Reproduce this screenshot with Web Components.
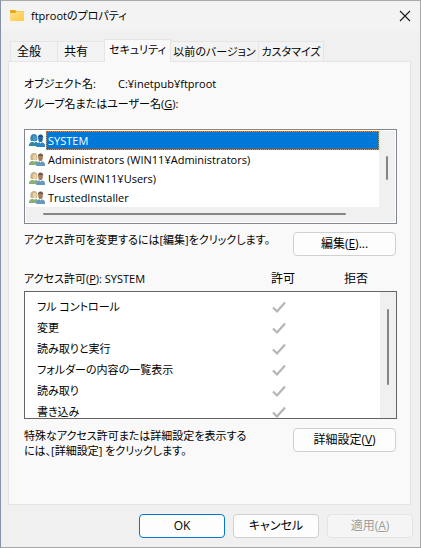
<!DOCTYPE html>
<html lang="ja">
<head>
<meta charset="utf-8">
<meta name="viewport" content="width=device-width, initial-scale=1">
<title>ftprootのプロパティ</title>
<style>
html,body{margin:0;height:100%}
body{display:flex;background:#f0f0f0;color:#000;font:11px/16px "Open Sans","Noto Sans CJK JP",sans-serif;font-feature-settings:"palt"}
</style>
</head>
<body>
<property-dialog>
  <title-bar slot="title">ftprootのプロパティ</title-bar>
  <tab-strip slot="tabs"></tab-strip>
  <security-panel slot="panel"></security-panel>
  <push-button slot="actions" kind="default">OK</push-button>
  <push-button slot="actions">キャンセル</push-button>
  <push-button slot="actions" kind="disabled">適用(<u>A</u>)</push-button>
</property-dialog>
<script>
const define = (name, html, setup) => customElements.define(name, class extends HTMLElement {
  connectedCallback() {
    if (this.shadowRoot) return;
    const root = this.attachShadow({mode: 'open'});
    root.innerHTML = '<style>*{box-sizing:border-box}</style>' + html;
    if (setup) setup(this, root);
  }
});

define('property-dialog', `
<style>
:host{display:flex;flex:1;min-width:0;min-height:100%;box-sizing:border-box;border:1px solid #a9a9a9;border-left-color:#8493a8;background:#f0f0f0}
.w{flex:1;min-width:0;display:flex;flex-direction:column}
main{flex:1;display:flex;flex-direction:column;padding:8px 9px 0 7px}
footer{display:flex;justify-content:flex-end;gap:8px;padding:9px 7px}
::slotted(security-panel){flex:1}
::slotted(push-button){width:86px}
</style>
<div class="w"><slot name="title"></slot>
<main><slot name="tabs"></slot><slot name="panel"></slot></main>
<footer><slot name="actions"></slot></footer></div>`);

define('title-bar', `
<style>
:host{display:flex;align-items:center;gap:7px;height:30px;padding:0 9px;background:#f3f3f3}
h1{flex:1;margin:0;font-size:11px;font-weight:400;line-height:16px}
svg{display:block}
button{border:0;background:none;padding:0;width:12px;height:12px}
</style>
<svg width="14" height="12" viewBox="0 0 14 12"><defs><linearGradient id="f" x2="1" y2="1"><stop stop-color="#ffe391"/><stop offset="1" stop-color="#fdc83f"/></linearGradient></defs><path d="M0 1Q0 0 1 0H5L6.500 1.200H13Q14 1.200 14 2.200V5H0Z" fill="#eda514"/><path d="M0 3H5.500L7 1.500H13Q14 1.500 14 2.500V10Q14 11 13 11H1Q0 11 0 10Z" fill="url(#f)"/></svg>
<h1><slot></slot></h1>
<button aria-label="閉じる"><svg width="12" height="12" viewBox="0 0 12 12"><path d="M1 1 11 11M11 1 1 11" stroke="#1a1a1a" stroke-width="1.1"/></svg></button>`);

define('tab-strip', `
<style>
:host{display:block}
div{display:flex;align-items:flex-end;padding-left:2px}
button{font:inherit;font-feature-settings:inherit;color:inherit;white-space:nowrap;height:20px;padding:1px 0 0;border:1px solid #e5e5e5;border-width:1px 1px 0 0;background:#f3f3f3}
button:first-child{border-left-width:1px}
button[aria-selected=true]{height:23px;margin:0 0 -1px -1px;padding:0 0 3px;border-left-width:1px;background:#f9f9f9;position:relative}
.a,.b{font-size:12px;text-align:left;padding-left:6px}
.a{flex:0 0 48px}.b{flex:0 0 47px}.c{flex:0 0 67px}.d{flex:0 0 88px}.e{flex:0 0 65px}
</style>
<div role="tablist"><button role="tab" class="a">全般</button><button role="tab" class="b">共有</button><button role="tab" class="c" aria-selected="true">セキュリティ</button><button role="tab" class="d">以前のバージョン</button><button role="tab" class="e">カスタマイズ</button></div>`);

define('push-button', `
<style>
:host{display:block}
button{display:block;width:100%;height:24px;padding:0;font:inherit;font-size:12px;font-feature-settings:inherit;color:#000;background:#fdfdfd;border:1px solid #d0d0d0;border-radius:4px}
:host([kind=default]) button{border-color:#0078d4}
:host([kind=disabled]) button{color:#9d9d9d;background:#f5f5f5;border-color:#e4e4e4}
</style>
<button><slot></slot></button>`, (el, root) => {
  root.querySelector('button').disabled = el.getAttribute('kind') === 'disabled';
});

define('user-row', `
<style>
:host{display:flex;align-items:center;height:19px;padding-left:3px}
svg{flex:none;display:block}
span{flex:1;align-self:stretch;padding:0 1px;border:1px dotted transparent;white-space:nowrap;line-height:17px}
:host([aria-selected=true]) span{background:#0078d7;color:#fff;border-color:#ff8728}
</style>
<svg width="17" height="16" viewBox="0 0 17 16">
<path class="wh" d="M2 8Q.8 6.500 1.500 4Q2.200 1 5 1T8.300 4Q8.800 6.500 7.800 8Z"/>
<ellipse class="w" cx="5.700" cy="5.500" rx="2" ry="2.900"/>
<path class="wb" d="M0 13V11.500Q.5 9.300 3.300 8.800L5.300 9.800 7.200 8.800Q9 9.300 9 13Z"/>
<ellipse class="m" cx="11.500" cy="5.700" rx="2.300" ry="3.400"/>
<path class="mh" d="M9 5Q8.700 1.500 11.600 1.500T14.200 5L13 3.700H10.200Z"/>
<path class="mb" d="M7.200 14V12.300Q7.300 10 10.300 9.300L11.600 10.500 12.900 9.300Q16 10 16 12.500V14Z"/>
</svg><span><slot></slot></span>`, (el, root) => {
  const on = el.getAttribute('aria-selected') === 'true';
  const c = on ? {wh:'#2f83b4',w:'#4c98c6',wb:'#35859c',m:'#1f66a6',mh:'#17508a',mb:'#2a86c8'}
               : {wh:'#c4b184',w:'#ecd0ac',wb:'#8aae78',m:'#a87b5a',mh:'#6b5848',mb:'#6699bf'};
  for (const k in c) root.querySelector('.' + k).style.fill = c[k];
});

define('user-list', `
<style>
:host{display:grid;grid-template-columns:1fr 16px;grid-template-rows:auto 15px;padding:1px;background:#fff;border:1px solid #828790}
.v,.h{background:#f0f0f0}
.v{padding:25px 7px 0;grid-row:1/3;grid-column:2;display:flex}
.h{padding:6px 33px 7px 17px;display:flex}
i{flex:1;background:#858585;border-radius:1px}
.v i{height:24px}
</style>
<div role="listbox" aria-label="グループ名またはユーザー名"><slot></slot></div>
<div class="v"><i></i></div><div class="h"><i></i></div>`);

define('permission-list', `
<style>
:host{display:block}
.head{display:grid;grid-template-columns:1fr 64px 82px;line-height:16px;padding-bottom:4px}
.head b{font-size:12px;font-weight:400;text-align:center}
.box{display:flex;height:128px;overflow:hidden;border:1px solid #646464;background:#fff}
table{flex:1;border-collapse:collapse;align-self:flex-start;margin-top:4px;table-layout:fixed}
th,td{height:21px;padding:0;text-align:center;font-weight:400;line-height:16px}
th{text-align:left;padding-left:12px}
td{width:77px}td:last-child{width:63px}
input{appearance:none;display:block;width:16px;height:14px;margin:0 auto}
input:checked{background:url("data:image/svg+xml,%3Csvg xmlns='http://www.w3.org/2000/svg' viewBox='0 0 16 14'%3E%3Cpath d='M2 7.500 6 11.500 14 2.500' fill='none' stroke='%23b5b5b5' stroke-width='2.200'/%3E%3C/svg%3E")}
.s{flex:0 0 16px;background:#f0f0f0;padding:17px 7px 0;display:flex}
i{flex:1;height:76px;background:#858585;border-radius:1px}
</style>
<div class="head"><span>アクセス許可(<u>P</u>): SYSTEM</span><b>許可</b><b>拒否</b></div>
<div class="box"><table aria-label="アクセス許可"><tbody></tbody></table><div class="s"><i></i></div></div>`, (el, root) => {
  root.querySelector('tbody').innerHTML = ['フル コントロール','変更','読み取りと実行','フォルダーの内容の一覧表示','読み取り','書き込み']
    .map(n => `<tr><th scope="row">${n}</th><td><input type="checkbox" checked disabled aria-label="${n} 許可"></td><td><input type="checkbox" disabled aria-label="${n} 拒否"></td></tr>`).join('');
});

define('security-panel', `
<style>
:host{display:block;box-sizing:border-box;background:#f9f9f9;border:1px solid #e5e5e5;padding:14px 13px 0 15px}
p{margin:0;line-height:15px;white-space:nowrap}
.name{display:grid;grid-template-columns:94px 1fr;line-height:16px}
.label{line-height:16px;padding:4px 0 17px}
user-list{margin:0 0 8px}
.line{display:flex;justify-content:space-between}
.line push-button{width:103px;margin-right:1px}
permission-list{margin:15px 0 9px}
</style>
<div class="name"><span>オブジェクト名:</span><span>C:¥inetpub¥ftproot</span></div>
<div class="label">グループ名またはユーザー名(<u>G</u>):</div>
<user-list>
<user-row role="option" aria-selected="true">SYSTEM</user-row>
<user-row role="option">Administrators (WIN11¥Administrators)</user-row>
<user-row role="option">Users (WIN11¥Users)</user-row>
<user-row role="option">TrustedInstaller</user-row>
</user-list>
<div class="line"><p>アクセス許可を変更するには[編集]をクリックします。</p><push-button>編集(<u>E</u>)...</push-button></div>
<permission-list></permission-list>
<div class="line"><p>特殊なアクセス許可または詳細設定を表示する<br>には、[詳細設定] をクリックします。</p><push-button>詳細設定(<u>V</u>)</push-button></div>`);
</script>
</body>
</html>
